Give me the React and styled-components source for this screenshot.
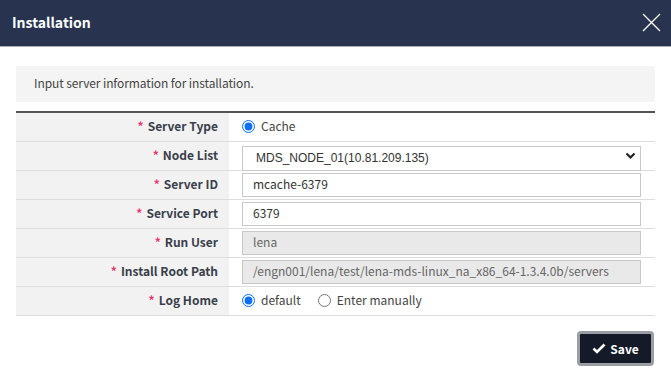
import React from "react";
import styled, { createGlobalStyle } from "styled-components";

const Global = createGlobalStyle`
  html, body { margin: 0; padding: 0; background: #fff; }
  body { font-family: "Noto Sans CJK KR", "Noto Sans", sans-serif; color: #333; }
  * { box-sizing: border-box; }
`;

const Modal = styled.div`
  width: 671px;
  height: 381px;
  background: #fff;
  display: flex;
  flex-direction: column;
`;

const Header = styled.header`
  height: 47px;
  background: #283350;
  border-bottom: 1px solid #a9abb1;
  display: flex;
  align-items: center;
  justify-content: space-between;
  padding: 0 10px 2px 12px;
`;

const Title = styled.h1`
  margin: 0;
  font-size: 14px;
  font-weight: 700;
  color: #fff;
`;

const CloseButton = styled.button`
  border: 0;
  background: none;
  padding: 0;
  width: 20px;
  height: 20px;
  display: flex;
  align-items: center;
  justify-content: center;
  cursor: pointer;
`;

const Body = styled.div`
  padding: 19px 16px 0 16px;
  display: flex;
  flex-direction: column;
`;

const Info = styled.div`
  height: 36px;
  background: #f4f4f4;
  padding: 0 0 3px 18px;
  display: flex;
  align-items: center;
  font-size: 12px;
  letter-spacing: -0.1px;
  color: #444;
`;

const Form = styled.div`
  margin-top: 9px;
  border-top: 2px solid #555;
`;

const Row = styled.div`
  display: grid;
  grid-template-columns: 213px 1fr;
  height: 29px;
  border-bottom: 1px solid #ddd;
`;

const Label = styled.div`
  background: #f2f2f2;
  display: flex;
  align-items: center;
  justify-content: flex-end;
  padding: 0 11px 3px 0;
  font-size: 12px;
  font-weight: 700;
  color: #3a3f4b;
`;

const Star = styled.span`
  color: #e8386d;
  margin-right: 4px;
  font-weight: 700;
`;

const Value = styled.div`
  display: flex;
  align-items: center;
  padding: 0 14px 1px 13px;
  gap: 17px;
`;

const TextInput = styled.input`
  width: 100%;
  height: 24px;
  border: 1px solid #c8c8c8;
  background: ${(p) => (p.disabled ? "#e9e9e9" : "#fff")};
  color: ${(p) => (p.disabled ? "#666" : "#333")};
  font-family: "Noto Sans CJK KR", "Noto Sans", sans-serif;
  font-size: 12px;
  padding: 0 0 2px 10px;
  outline: none;
  border-radius: 0;
`;

const SelectWrap = styled.div`
  position: relative;
  width: 100%;
  height: 25px;
`;

const Select = styled.select`
  appearance: none;
  width: 100%;
  height: 25px;
  border: 1px solid #c8c8c8;
  background: #fff;
  color: #333;
  font-family: "Liberation Sans", Arial, sans-serif;
  font-size: 12px;
  padding: 0 0 0 13px;
  border-radius: 0;
  outline: none;
`;

const Chevron = styled.svg`
  position: absolute;
  right: 5px;
  top: 9px;
  pointer-events: none;
`;

const RadioLabel = styled.label`
  display: flex;
  align-items: center;
  font-size: 12px;
  color: #444;
  gap: 6px;
`;

const RadioText = styled.span`
  padding-bottom: 2px;
`;

const Radio = styled.input`
  margin: 0;
  width: 13px;
  height: 13px;
  accent-color: #0d6efd;
`;

const Footer = styled.div`
  display: flex;
  justify-content: flex-end;
  margin-top: 15px;
  padding-right: 1px;
`;

const SaveButton = styled.button`
  width: 77px;
  height: 35px;
  background: #141a27;
  border: 3px solid #9b9da5;
  border-radius: 4px;
  color: #fff;
  font-family: "Noto Sans CJK KR", "Noto Sans", sans-serif;
  font-size: 12px;
  font-weight: 700;
  display: flex;
  align-items: center;
  justify-content: center;
  gap: 4px;
  cursor: pointer;
`;

const Field = ({ label, children }) => (
  <Row>
    <Label>
      <Star>*</Star>
      {label}
    </Label>
    <Value>{children}</Value>
  </Row>
);

const RadioOption = ({ name, checked, children }) => (
  <RadioLabel>
    <Radio type="radio" name={name} defaultChecked={checked} />
    <RadioText>{children}</RadioText>
  </RadioLabel>
);

export default function App() {
  return (
    <>
      <Global />
      <Modal>
        <Header>
          <Title>Installation</Title>
          <CloseButton aria-label="close">
            <svg width="19" height="19" viewBox="0 0 19 19">
              <path d="M1 1 L18 18 M18 1 L1 18" stroke="#fff" strokeWidth="1.3" />
            </svg>
          </CloseButton>
        </Header>
        <Body>
          <Info>Input server information for installation.</Info>
          <Form>
            <Field label="Server Type">
              <RadioOption name="type" checked>Cache</RadioOption>
            </Field>
            <Field label="Node List">
              <SelectWrap>
                <Select defaultValue="n1">
                  <option value="n1">MDS_NODE_01(10.81.209.135)</option>
                </Select>
                <Chevron width="11" height="8" viewBox="0 0 11 8">
                  <path d="M1.5 1.5 L5.5 5.5 L9.5 1.5" stroke="#222" strokeWidth="2.2" fill="none" />
                </Chevron>
              </SelectWrap>
            </Field>
            <Field label="Server ID">
              <TextInput defaultValue="mcache-6379" />
            </Field>
            <Field label="Service Port">
              <TextInput defaultValue="6379" />
            </Field>
            <Field label="Run User">
              <TextInput defaultValue="lena" disabled />
            </Field>
            <Field label="Install Root Path">
              <TextInput
                defaultValue="/engn001/lena/test/lena-mds-linux_na_x86_64-1.3.4.0b/servers"
                disabled
              />
            </Field>
            <Field label="Log Home">
              <RadioOption name="log" checked>default</RadioOption>
              <RadioOption name="log">Enter manually</RadioOption>
            </Field>
          </Form>
          <Footer>
            <SaveButton>
              <svg width="14" height="11" viewBox="0 0 14 11">
                <path d="M1.5 5.5 L5 9 L12.5 1.5" stroke="#fff" strokeWidth="2.6" fill="none" />
              </svg>
              Save
            </SaveButton>
          </Footer>
        </Body>
      </Modal>
    </>
  );
}
